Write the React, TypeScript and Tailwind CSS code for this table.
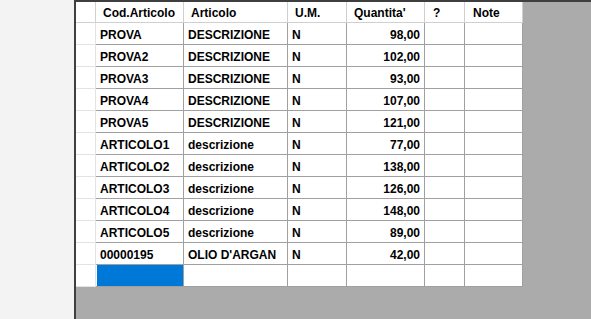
import React from "react"

const rows = [
  { cod: "PROVA", art: "DESCRIZIONE", um: "N", qty: "98,00" },
  { cod: "PROVA2", art: "DESCRIZIONE", um: "N", qty: "102,00" },
  { cod: "PROVA3", art: "DESCRIZIONE", um: "N", qty: "93,00" },
  { cod: "PROVA4", art: "DESCRIZIONE", um: "N", qty: "107,00" },
  { cod: "PROVA5", art: "DESCRIZIONE", um: "N", qty: "121,00" },
  { cod: "ARTICOLO1", art: "descrizione", um: "N", qty: "77,00" },
  { cod: "ARTICOLO2", art: "descrizione", um: "N", qty: "138,00" },
  { cod: "ARTICOLO3", art: "descrizione", um: "N", qty: "126,00" },
  { cod: "ARTICOLO4", art: "descrizione", um: "N", qty: "148,00" },
  { cod: "ARTICOLO5", art: "descrizione", um: "N", qty: "89,00" },
  { cod: "00000195", art: "OLIO D'ARGAN", um: "N", qty: "42,00" },
]

const cols = "grid grid-cols-[20px_88px_104px_59px_78px_40px_58px]"
const cell = "h-[22px] border-r border-b border-[#a0a0a0] flex items-center bg-white pt-[2px]"
const head = "h-[21px] border-r border-b border-[#d0d0d0] flex items-center bg-white pl-[7px] pt-[1px]"

export default function App() {
  return (
    <div className="flex w-[591px] h-[319px] overflow-hidden font-['Liberation_Sans',Arial,sans-serif] font-bold text-[12px] text-black">
      {/* left panel */}
      <div className="w-[74px] shrink-0 bg-[#f3f3f3]" />

      {/* grid area */}
      <div className="flex-1 bg-[#ababab] border-t-2 border-l-2 border-[#3f3f3f]">
        <div className="w-[447px]">
          {/* header */}
          <div className={cols}>
            <div className="h-[21px] border-r border-b border-[#d0d0d0] bg-white" />
            <div className={head}>Cod.Articolo</div>
            <div className={head}>Articolo</div>
            <div className={head}>U.M.</div>
            <div className={head}>Quantita'</div>
            <div className={head + " pl-[8px]"}>?</div>
            <div className={head + " pl-[8px]"}>Note</div>
          </div>

          {rows.map((r) => (
            <div key={r.cod} className={cols}>
              <div className="h-[22px] border-r border-b border-[#e3e3e3] bg-white" />
              <div className={cell + " pl-[4px]"}>{r.cod}</div>
              <div className={cell + " pl-[4px]"}>{r.art}</div>
              <div className={cell + " pl-[4px]"}>{r.um}</div>
              <div className={cell + " justify-end pr-[4px]"}>{r.qty}</div>
              <div className={cell} />
              <div className={cell} />
            </div>
          ))}

          {/* new row */}
          <div className={cols}>
            <div className="h-[22px] border-r border-b border-[#e3e3e3] bg-white" />
            <div className="h-[22px] border-r border-b border-[#a0a0a0] bg-white pl-[1px]">
              <div className="h-full bg-[#0078d7]" />
            </div>
            <div className={cell} />
            <div className={cell} />
            <div className={cell} />
            <div className={cell} />
            <div className={cell} />
          </div>
        </div>
      </div>
    </div>
  )
}
